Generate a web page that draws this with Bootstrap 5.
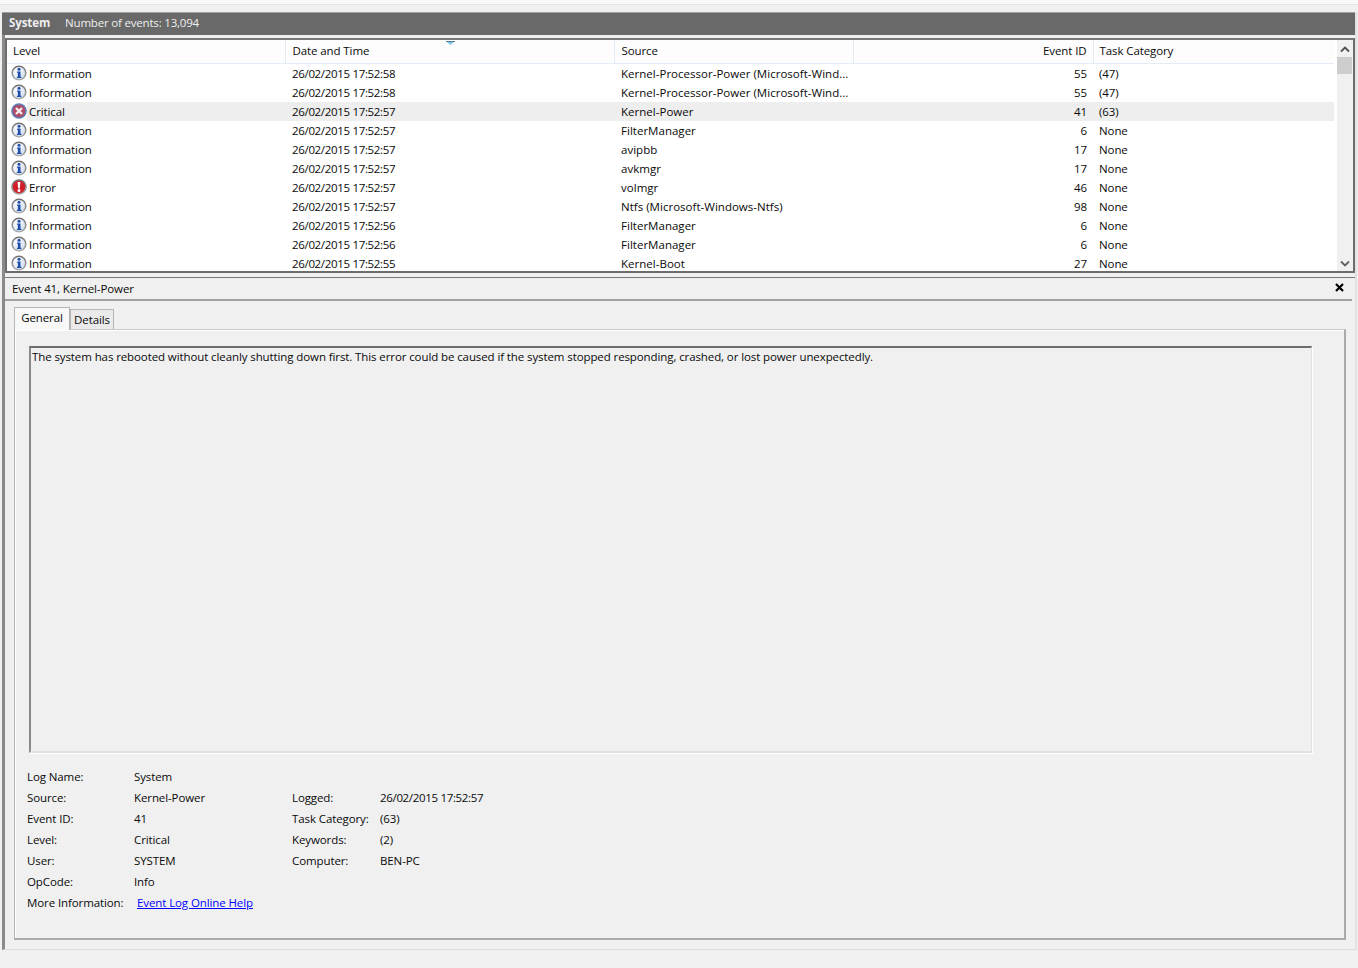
<!DOCTYPE html>
<html lang="en"><head><meta charset="utf-8"><title>Event Viewer</title>
<link href="https://cdn.jsdelivr.net/npm/bootstrap@5.3.0/dist/css/bootstrap.min.css" rel="stylesheet">
<style>
html,body{height:968px;overflow:hidden}
body{background:#f0f0f0;color:#0a0a0a;font:11.5px/19px "Open Sans","Noto Sans",sans-serif;letter-spacing:-.1px}
.topstrip{height:12px;background:linear-gradient(#f9f9f9 0 4px,#e4e4e4 4px 5px,#f0f0f0 5px)}
.frame{height:938px;margin-left:2px;border-left:3px solid #8a8a8a;border-bottom:1px solid #ddd;border-right:2px solid #e2e2e2;margin-right:1px}
.hdrbar{height:23px;margin-left:-3px;background:#696969;border-top:1px solid #a0a0a0;color:#eee;padding-left:7px;gap:15px;line-height:20px}
.hdrbar b{font-weight:700}
.hdrbar span{letter-spacing:-.19px}
.listbox{height:235px;margin:3px 0 0;background:#fff;border:2px solid #6d6d6d;border-top-color:#777;overflow:hidden;position:relative}
.listmain{width:1332px;height:100%;overflow:hidden;position:relative}
.evtable{table-layout:fixed;width:1327px;margin:0;border-collapse:collapse;--bs-table-bg:transparent;color:#0a0a0a}
.evtable th,.evtable td{padding:0 0 0 7px;border:0;white-space:nowrap;overflow:hidden;font-weight:400;line-height:19px;height:19px;color:#0a0a0a;box-shadow:none}
.evtable thead th{height:23px;background:#fdfdfd;border-bottom:1px solid #e3ebf5;border-right:1px solid #e3ebf5;vertical-align:middle;line-height:22px;padding-top:0}
.evtable thead th:first-child{padding-left:6px}
.evtable thead th.noright{border-right:0}
.evtable td:first-child{padding-left:22px;position:relative}
.evtable .numcell{text-align:right;padding:0 6px 0 0}
.evtable td:last-child,.evtable th:last-child{padding-left:6px}
.evtable td:nth-child(2),.datelike{letter-spacing:-.33px}
.evtable td:nth-child(3){letter-spacing:.02px}
.evtable .hot td{background:#eee}
.evtable td:first-child svg{position:absolute;left:4px;top:1px}
.evtable .hot td:first-child{background:linear-gradient(90deg,#fff 20px,#eee 20px)}
.sorttri{position:absolute;left:439px;top:1px}
.sbar{width:16px;position:absolute;right:0;top:0;bottom:0;background:#f0f0f0}
.sthumb{position:absolute;left:0;right:1px;top:17px;height:17px;background:#cdcdcd}
.sbar svg{position:absolute;left:3px}
.detail{margin-top:4px;border-top:1px solid #777;height:673px;position:relative}
.dtitle{height:23px;line-height:21px;padding:0 0 0 7px;border-bottom:2px solid #a0a0a0;margin-right:3px;justify-content:space-between}
.dtitle svg{margin:5px 8px 0 0}
.tabrow{padding:6px 0 0 9px;height:28px;align-items:flex-end;margin-bottom:0}
.tabrow .nav-link{color:#0a0a0a;padding:0;border-radius:0;text-align:center;font-size:11.5px;margin:0}
.tabrow .tabon{width:56px;height:23px;background:#f8f8f8;border:1px solid #b5b5b5;border-bottom:0;line-height:20px;position:relative;z-index:2;margin-bottom:-1px}
.tabrow .taboff{width:44px;height:20px;background:#eaeaea;border:1px solid #b5b5b5;border-bottom:0;line-height:20px}
.tabpane{margin-left:9px;width:1332px;height:611px;border:1px solid #b5b5b5;border-right:2px solid #aaa;border-bottom:2px solid #aaa;border-top-color:#c8c8c8;box-shadow:inset 1px 1px 0 #fff;padding:16px 0 0 12px}
.msgbox{margin-left:2px;width:1283px;height:407px;border-top:2px solid #6d6d6d;border-left:2px solid #8a8a8a;border-right:1px solid #e0e0e0;border-bottom:2px solid #e0e0e0;padding:0 0 0 1px;line-height:17px;box-shadow:1px 1px 0 #fff}
.metagrid{display:grid;grid-template-columns:107px 158px 88px 1fr;grid-auto-rows:21px;line-height:21px;margin-top:13px}
.metagrid a{color:#00f;margin-left:3px;white-space:nowrap}
.morelbl{white-space:nowrap}
</style></head>
<body>
<div class="topstrip"></div>
<div class="frame">
  <div class="hdrbar d-flex"><b>System</b><span>Number of events: 13,094</span></div>
  <div class="listbox">
    <div class="listmain">
      <table class="table evtable" id="evt">
        <colgroup><col style="width:278px"><col style="width:329px"><col style="width:239px"><col style="width:240px"><col style="width:241px"></colgroup>
        <thead><tr><th>Level</th><th>Date and Time</th><th>Source</th><th class="numcell">Event ID</th><th class="noright">Task Category</th></tr></thead>
        <tbody>
        <tr><td><svg width="16" height="16"><use href="#ico-info"/></svg>Information</td><td>26/02/2015 17:52:58</td><td>Kernel-Processor-Power (Microsoft-Wind...</td><td class="numcell">55</td><td>(47)</td></tr>
        <tr><td><svg width="16" height="16"><use href="#ico-info"/></svg>Information</td><td>26/02/2015 17:52:58</td><td>Kernel-Processor-Power (Microsoft-Wind...</td><td class="numcell">55</td><td>(47)</td></tr>
        <tr class="hot"><td><svg width="16" height="16"><use href="#ico-crit"/></svg>Critical</td><td>26/02/2015 17:52:57</td><td>Kernel-Power</td><td class="numcell">41</td><td>(63)</td></tr>
        <tr><td><svg width="16" height="16"><use href="#ico-info"/></svg>Information</td><td>26/02/2015 17:52:57</td><td>FilterManager</td><td class="numcell">6</td><td>None</td></tr>
        <tr><td><svg width="16" height="16"><use href="#ico-info"/></svg>Information</td><td>26/02/2015 17:52:57</td><td>avipbb</td><td class="numcell">17</td><td>None</td></tr>
        <tr><td><svg width="16" height="16"><use href="#ico-info"/></svg>Information</td><td>26/02/2015 17:52:57</td><td>avkmgr</td><td class="numcell">17</td><td>None</td></tr>
        <tr><td><svg width="16" height="16"><use href="#ico-err"/></svg>Error</td><td>26/02/2015 17:52:57</td><td>volmgr</td><td class="numcell">46</td><td>None</td></tr>
        <tr><td><svg width="16" height="16"><use href="#ico-info"/></svg>Information</td><td>26/02/2015 17:52:57</td><td>Ntfs (Microsoft-Windows-Ntfs)</td><td class="numcell">98</td><td>None</td></tr>
        <tr><td><svg width="16" height="16"><use href="#ico-info"/></svg>Information</td><td>26/02/2015 17:52:56</td><td>FilterManager</td><td class="numcell">6</td><td>None</td></tr>
        <tr><td><svg width="16" height="16"><use href="#ico-info"/></svg>Information</td><td>26/02/2015 17:52:56</td><td>FilterManager</td><td class="numcell">6</td><td>None</td></tr>
        <tr><td><svg width="16" height="16"><use href="#ico-info"/></svg>Information</td><td>26/02/2015 17:52:55</td><td>Kernel-Boot</td><td class="numcell">27</td><td>None</td></tr>
        </tbody>
      </table>
      <svg class="sorttri" width="9" height="4" viewBox="0 0 9 4"><path d="M0 0h9L4.5 4z" fill="#7cc4ea"/><path d="M0 .5h9" stroke="#5a7a90" stroke-width="1"/></svg>
    </div>
    <div class="sbar">
      <svg style="top:6px" width="10" height="7" viewBox="0 0 10 7"><path d="M1 5.5l4-4 4 4" fill="none" stroke="#505050" stroke-width="1.8"/></svg>
      <div class="sthumb"></div>
      <svg style="bottom:4px" width="10" height="7" viewBox="0 0 10 7"><path d="M1 1.5l4 4 4-4" fill="none" stroke="#606060" stroke-width="1.8"/></svg>
    </div>
  </div>
  <div class="detail">
    <div class="dtitle d-flex"><span>Event 41, Kernel-Power</span><svg width="9" height="9" viewBox="0 0 9 9"><path d="M1 1l7 7M8 1L1 8" stroke="#000" stroke-width="2.2"/></svg></div>
    <ul class="nav tabrow d-flex">
      <li class="nav-item"><a class="nav-link tabon" href="#">General</a></li>
      <li class="nav-item"><a class="nav-link taboff" href="#">Details</a></li>
    </ul>
    <div class="tabpane">
      <div class="msgbox">The system has rebooted without cleanly shutting down first. This error could be caused if the system stopped responding, crashed, or lost power unexpectedly.</div>
      <div class="metagrid">
        <div>Log Name:</div><div>System</div><div></div><div></div>
        <div>Source:</div><div>Kernel-Power</div><div>Logged:</div><div class="datelike">26/02/2015 17:52:57</div>
        <div>Event ID:</div><div>41</div><div>Task Category:</div><div>(63)</div>
        <div>Level:</div><div>Critical</div><div>Keywords:</div><div>(2)</div>
        <div>User:</div><div>SYSTEM</div><div>Computer:</div><div>BEN-PC</div>
        <div>OpCode:</div><div>Info</div><div></div><div></div>
        <div class="morelbl">More Information:</div><div><a href="#">Event Log Online Help</a></div><div></div><div></div>
      </div>
    </div>
  </div>
</div>
<svg width="0" height="0" class="position-absolute">
  <defs>
    <linearGradient id="g-ring" x1="0" y1="0" x2="0" y2="1"><stop offset="0" stop-color="#6f6f6f"/><stop offset="1" stop-color="#b0b0b0"/></linearGradient>
    <linearGradient id="g-face" x1="0" y1="0" x2="1" y2="1"><stop offset="0" stop-color="#ffffff"/><stop offset="1" stop-color="#cfdcf2"/></linearGradient>
    <symbol id="ico-info" viewBox="0 0 16 16"><circle cx="8" cy="8" r="7.6" fill="url(#g-ring)"/><circle cx="8" cy="8" r="6" fill="url(#g-face)"/><circle cx="8" cy="4.3" r="1.5" fill="#1f4fa8"/><path d="M6.2 6.6h3.3v5.2h.9v1.3H5.9v-1.3h1V7.9h-.7z" fill="#1f4fa8"/></symbol>
    <symbol id="ico-crit" viewBox="0 0 16 16"><circle cx="8" cy="8" r="7.8" fill="#5c7fb8"/><circle cx="8" cy="8" r="6.2" fill="#b04a66"/><path d="M5 5l6 6M11 5l-6 6" stroke="#f4eef0" stroke-width="2.4"/></symbol>
    <symbol id="ico-err" viewBox="0 0 16 16"><circle cx="8" cy="8" r="7.8" fill="url(#g-ring)"/><circle cx="8" cy="8" r="6.2" fill="#cf1f28"/><path d="M6.6 3h2.8L8.8 9.4H7.2z" fill="#fff"/><circle cx="8" cy="11.6" r="1.5" fill="#fff"/></symbol>
  </defs>
</svg>
</body></html>
